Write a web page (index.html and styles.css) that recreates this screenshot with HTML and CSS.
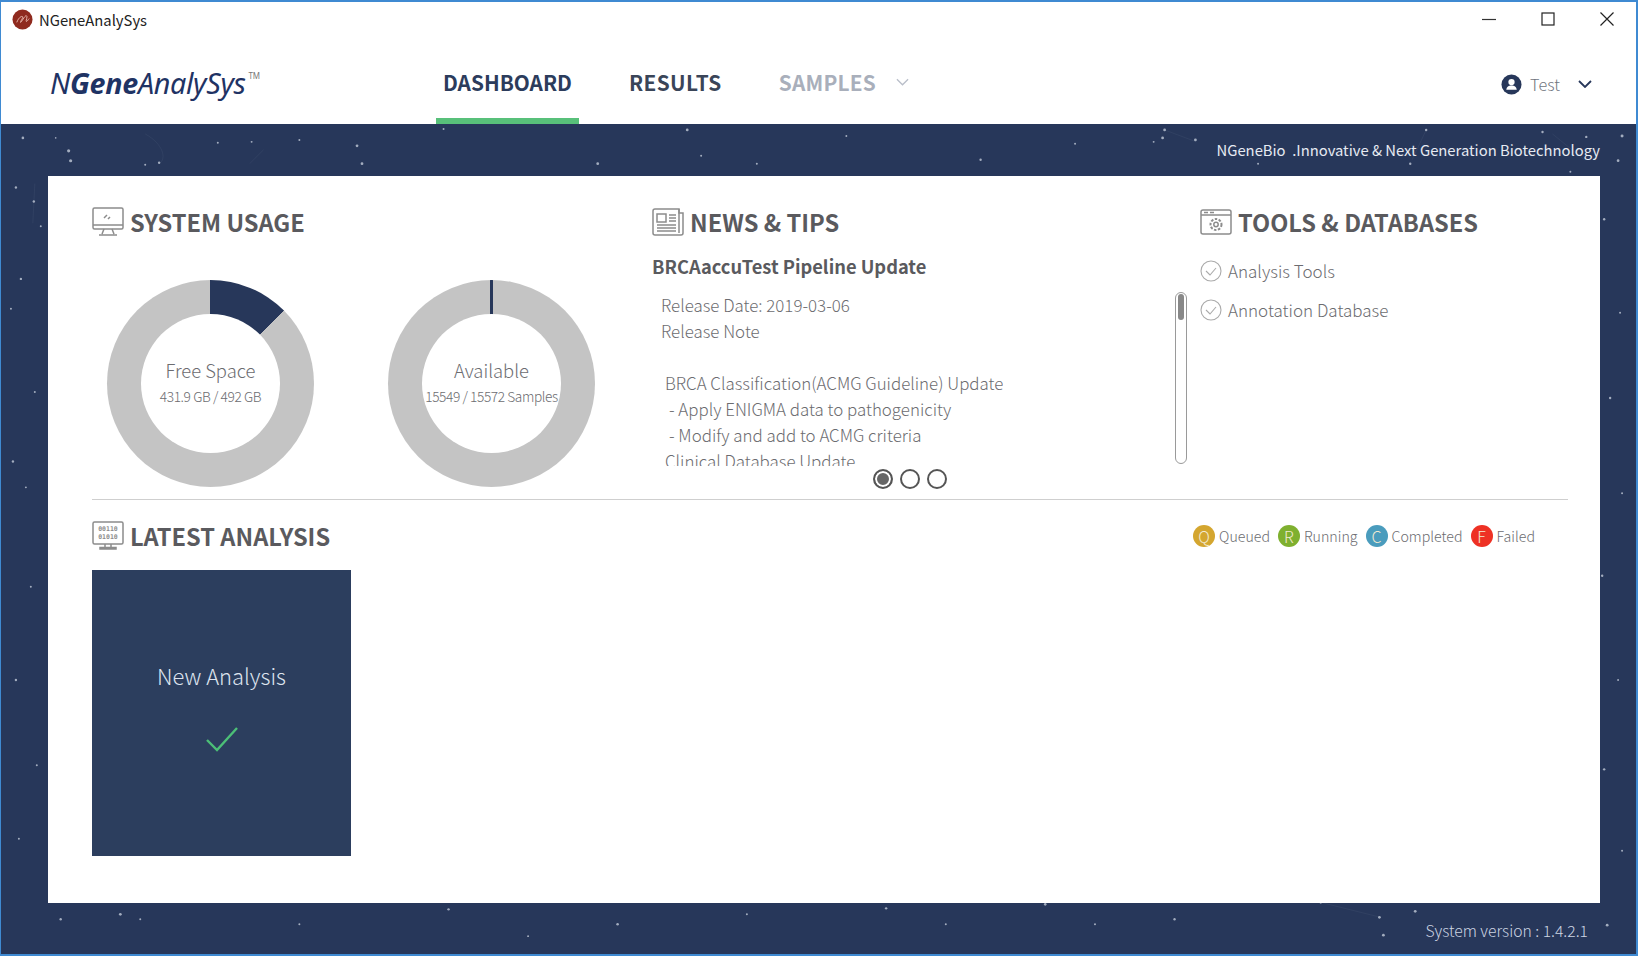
FILE: index.html
```html
<!DOCTYPE html>
<html lang="en">
<head>
<meta charset="utf-8">
<title>NGeneAnalySys</title>
<link rel="stylesheet" href="styles.css">
</head>
<body>
<div class="window">
  <div class="titlebar">
    <svg class="app-icon" viewBox="0 0 22 22"><circle cx="11" cy="11" r="10.5" fill="#8f2a1e"/><path d="M5 14c2-5 5-7 6-6s-3 6-2 6 4-7 6-7-1 6 0 6 2-2 3-3" fill="none" stroke="#e8b9ae" stroke-width="1"/></svg>
    <span class="app-title">NGeneAnalySys</span>
    <div class="win-controls">
      <svg viewBox="0 0 14 14"><path d="M0 7.5h14" stroke="#333" stroke-width="1.2"/></svg>
      <svg viewBox="0 0 14 14"><rect x="1" y="1" width="12" height="12" fill="none" stroke="#222" stroke-width="1.2"/></svg>
      <svg viewBox="0 0 14 14"><path d="M.5.5l13 13M13.500.5l-13 13" stroke="#222" stroke-width="1.2"/></svg>
    </div>
  </div>
  <header class="appbar">
    <div class="logo"><span class="logo-n">N</span><b>Gene</b>AnalySys<sup>TM</sup></div>
    <nav class="nav">
      <a class="tab tab-active">DASHBOARD</a>
      <a class="tab">RESULTS</a>
      <a class="tab tab-muted">SAMPLES
        <svg class="tab-chev" viewBox="0 0 14 8"><path d="M1 1l6 6 6-6" fill="none" stroke="#b9bec9" stroke-width="1.4"/></svg>
      </a>
    </nav>
    <div class="user">
      <svg class="user-icon" viewBox="0 0 22 22"><circle cx="11" cy="11" r="10.500" fill="#27375a"/><circle cx="11" cy="8.500" r="3.300" fill="#fff"/><path d="M5.500 16.500c.5-3.500 2.500-4.500 5.500-4.500s5 1 5.500 4.500z" fill="#fff"/></svg>
      <span class="user-name">Test</span>
      <svg class="user-chev" viewBox="0 0 14 8"><path d="M1 1l6 6 6-6" fill="none" stroke="#27375a" stroke-width="1.800"/></svg>
    </div>
  </header>
  <main class="stage">
    <svg class="stars" viewBox="0 0 1644 836" preserveAspectRatio="none" aria-hidden="true">
      <g fill="#c3cbd9" opacity=".8">
        <circle cx="22" cy="14" r="1.300"/><circle cx="55" cy="14" r=".8"/><circle cx="68" cy="27" r="1.600"/><circle cx="70" cy="37" r="1.600"/><circle cx="145" cy="41" r="1"/><circle cx="159" cy="39" r="1.200"/><circle cx="218" cy="19" r="1"/><circle cx="252" cy="18" r="1"/><circle cx="300" cy="16" r="1"/><circle cx="358" cy="22" r="1.400"/><circle cx="363" cy="40" r="1.400"/><circle cx="445" cy="5" r="1"/><circle cx="600" cy="40" r="1.400"/><circle cx="690" cy="6" r="1.400"/><circle cx="704" cy="32" r="1"/><circle cx="760" cy="40" r="1"/><circle cx="850" cy="12" r="1"/><circle cx="985" cy="36" r="1.200"/><circle cx="1080" cy="20" r="1"/><circle cx="1170" cy="6" r="1.400"/><circle cx="1168" cy="14" r="1.400"/><circle cx="1201" cy="16" r="1.400"/><circle cx="1159" cy="18" r="1"/><circle cx="1264" cy="40" r="1"/><circle cx="1417" cy="40" r="1.200"/><circle cx="1433" cy="6" r="1.200"/><circle cx="1550" cy="8" r="1.200"/><circle cx="1594" cy="13" r="1.200"/><circle cx="1630" cy="12" r="1.500"/><circle cx="1626" cy="37" r="1.400"/><circle cx="1578" cy="48" r="1"/>
        <circle cx="15" cy="64" r="1.200"/><circle cx="33" cy="78" r="1.200"/><circle cx="40" cy="103" r="1"/><circle cx="20" cy="156" r="1.200"/><circle cx="10" cy="186" r="1"/><circle cx="34" cy="270" r="1"/><circle cx="12" cy="340" r="1.200"/><circle cx="25" cy="366" r="1"/><circle cx="30" cy="466" r="1"/><circle cx="15" cy="560" r="1.200"/><circle cx="36" cy="646" r="1"/><circle cx="18" cy="720" r="1"/>
        <circle cx="1612" cy="96" r="1.200"/><circle cx="1628" cy="190" r="1"/><circle cx="1618" cy="276" r="1.200"/><circle cx="1630" cy="372" r="1"/><circle cx="1610" cy="455" r="1.200"/><circle cx="1626" cy="560" r="1"/><circle cx="1612" cy="650" r="1.200"/><circle cx="1630" cy="732" r="1"/>
        <circle cx="60" cy="801" r="1.200"/><circle cx="120" cy="796" r="1.400"/><circle cx="140" cy="801" r="1"/><circle cx="250" cy="781" r="1.200"/><circle cx="300" cy="806" r="1"/><circle cx="450" cy="791" r="1.200"/><circle cx="530" cy="818" r="1"/><circle cx="620" cy="806" r="1.300"/><circle cx="750" cy="796" r="1"/><circle cx="890" cy="790" r="1.200"/><circle cx="950" cy="806" r="1"/><circle cx="1050" cy="786" r="1.300"/><circle cx="1100" cy="806" r="1"/><circle cx="1180" cy="801" r="1.200"/><circle cx="1327" cy="784" r="1.300"/><circle cx="1386" cy="799" r="1.400"/><circle cx="1422" cy="793" r="1.400"/><circle cx="1390" cy="817" r="1.400"/><circle cx="1615" cy="807" r="1.400"/>
      </g>
      <g fill="none" stroke="#b9c2d2" stroke-width=".5" opacity=".14">
        <path d="M145 10c18 10 22 25 14 30M250 40l14-14M1170 6l32 12M1433 6l-14 30M1560 10l32 26M34 60l-2 40M1327 784l60 15"/>
      </g>
    </svg>
    <div class="tagline">NGeneBio &nbsp;.Innovative &amp; Next Generation Biotechnology</div>
    <section class="panel">
      <div class="top-grid">
        <div class="col">
          <h2 class="section-title">
            <svg class="section-icon" viewBox="0 0 32 30"><g fill="none" stroke="#8c8c8c" stroke-width="1.500"><rect x="1" y="1" width="30" height="21" rx="1.500"/><path d="M1 18h30M12 22l-2 5M20 22l2 5M7 28h18"/><path d="M12 11l3-3M16 12l2-2"/></g></svg>
            SYSTEM USAGE
          </h2>
          <div class="donuts">
            <div class="donut donut-disk">
              <div class="donut-hole"><span class="donut-label">Free Space</span><span class="donut-value">431.9 GB / 492 GB</span></div>
            </div>
            <div class="donut donut-samples">
              <div class="donut-hole"><span class="donut-label">Available</span><span class="donut-value">15549 / 15572 Samples</span></div>
            </div>
          </div>
        </div>
        <div class="col">
          <h2 class="section-title">
            <svg class="section-icon" viewBox="0 0 32 30"><g fill="none" stroke="#8c8c8c" stroke-width="1.500"><path d="M27 2H3a2 2 0 0 0-2 2v22a2 2 0 0 0 2 2h26a2 2 0 0 0 2-2V6h-4z"/><path d="M27 2v24"/><rect x="5" y="7" width="9" height="8"/><path d="M17 8h7M17 11h7M17 14h7M5 18h19M5 21h19M5 24h19"/></g></svg>
            NEWS &amp; TIPS
          </h2>
          <h3 class="news-title">BRCAaccuTest Pipeline Update</h3>
          <div class="news-body">
            <div class="news-text">
              <p class="ind-1">Release Date: 2019-03-06</p>
              <p class="ind-1">Release Note</p>
              <p class="blank">&nbsp;</p>
              <p class="ind-2">BRCA Classification(ACMG Guideline) Update</p>
              <p class="ind-3">- Apply ENIGMA data to pathogenicity</p>
              <p class="ind-3">- Modify and add to ACMG criteria</p>
              <p class="ind-2">Clinical Database Update</p>
            </div>
            <div class="scrollbar"><div class="scroll-thumb"></div></div>
          </div>
          <div class="pager">
            <span class="pager-dot pager-on"></span><span class="pager-dot"></span><span class="pager-dot"></span>
          </div>
        </div>
        <div class="col">
          <h2 class="section-title">
            <svg class="section-icon" viewBox="0 0 32 30"><g fill="none" stroke="#8c8c8c" stroke-width="1.500"><rect x="1" y="3" width="30" height="24" rx="2"/><path d="M1 8h30M4 5.500h4M10 5.500h4"/><circle cx="16" cy="17.500" r="2.200"/><circle cx="16" cy="17.500" r="5.500" stroke-width="2" stroke-dasharray="2.500 1.500"/></g></svg>
            TOOLS &amp; DATABASES
          </h2>
          <ul class="tools">
            <li class="tool"><svg class="tool-check" viewBox="0 0 22 22"><circle cx="11" cy="11" r="10" fill="none" stroke="#aaa" stroke-width="1.100"/><path d="M6 11l4 4 6-7" fill="none" stroke="#aaa" stroke-width="1.100"/></svg>Analysis Tools</li>
            <li class="tool"><svg class="tool-check" viewBox="0 0 22 22"><circle cx="11" cy="11" r="10" fill="none" stroke="#aaa" stroke-width="1.100"/><path d="M6 11l4 4 6-7" fill="none" stroke="#aaa" stroke-width="1.100"/></svg>Annotation Database</li>
          </ul>
        </div>
      </div>
      <hr class="divider">
      <div class="latest-head">
        <h2 class="section-title">
          <svg class="section-icon" viewBox="0 0 32 30"><g fill="none" stroke="#8c8c8c" stroke-width="1.500"><rect x="1" y="1" width="30" height="22" rx="1.500"/><path d="M13 23v3M19 23v3M8 28h16v-1.500H8z"/></g><text x="16" y="10" class="bits">00110</text><text x="16" y="18" class="bits">01010</text></svg>
          LATEST ANALYSIS
        </h2>
        <div class="legend">
          <span class="legend-item"><i class="badge badge-q">Q</i>Queued</span>
          <span class="legend-item"><i class="badge badge-r">R</i>Running</span>
          <span class="legend-item"><i class="badge badge-c">C</i>Completed</span>
          <span class="legend-item"><i class="badge badge-f">F</i>Failed</span>
        </div>
      </div>
      <div class="new-card">
        <span class="new-label">New Analysis</span>
        <svg class="new-check" viewBox="0 0 34 28"><path d="M2 15l10 10L32 3" fill="none" stroke="#4cbf77" stroke-width="2.400"/></svg>
      </div>
    </section>
    <div class="version">System version : 1.4.2.1</div>
  </main>
</div>
</body>
</html>
```

FILE: styles.css
```css
* { box-sizing: border-box; }
html, body { margin: 0; padding: 0; }
body {
  width: 1644px;
  height: 960px;
  overflow: hidden;
  background: #fff;
  font-family: "Noto Sans CJK KR", "Noto Sans", sans-serif;
  color: #6b6b6b;
}
.window {
  width: 1638px;
  height: 956px;
  display: flex;
  flex-direction: column;
  border: 1px solid #3f8ad2;
  border-width: 2px 2px 2px 1px;
}
.titlebar {
  height: 38px;
  display: flex;
  align-items: center;
  padding: 0 0 4px 11px;
  background: #fff;
}
.app-icon { width: 21px; height: 21px; margin-right: 6px; }
.app-title { font-size: 14.8px; color: #222; }
.win-controls {
  margin-left: auto;
  display: flex;
  gap: 45px;
  padding-right: 22px;
}
.win-controls svg { width: 14px; height: 14px; }

.appbar {
  height: 84px;
  display: flex;
  align-items: stretch;
  background: #fff;
  padding-left: 49px;
  padding-right: 44px;
}
.logo {
  width: 386px;
  padding-top: 23px;
  font-family: "Noto Sans", sans-serif;
  font-style: italic;
  font-size: 28.7px;
  letter-spacing: -.3px;
  color: #1f3364;
}
.logo b { font-weight: 700; }
.logo sup { font-size: 8px; font-style: normal; color: #777; vertical-align: 15px; margin-left: 3px; }
.nav { display: flex; align-items: stretch; }
.tab {
  display: flex;
  align-items: center;
  gap: 20px;
  height: 84px;
  padding: 5px 7px 0;
  margin-right: 43px;
  font-size: 20.8px;
  font-weight: 700;
  letter-spacing: .4px;
  color: #3a4558;
  border-bottom: 6px solid transparent;
}
.tab-active { color: #2c3c5c; letter-spacing: 0; border-bottom-color: #58c07a; }
.tab-muted { color: #a9afbb; letter-spacing: .2px; }
.tab-chev { width: 13px; height: 8px; }
.user { margin-left: auto; display: flex; align-items: center; padding-top: 4px; }
.user-icon { width: 21px; height: 21px; margin-right: 8px; }
.user-name { font-size: 16.3px; font-weight: 300; color: #70757e; margin-right: 18px; }
.user-chev { width: 14px; height: 8px; }

.stage {
  position: relative;
  flex: 1;
  display: flex;
  flex-direction: column;
  background: #27375a;
  padding: 0 36px 0 47px;
}
.stars { position: absolute; left: 0; top: 0; width: 100%; height: 100%; }
.tagline {
  position: relative;
  height: 52px;
  line-height: 52px;
  text-align: right;
  font-size: 14.8px;
  color: #e6eaf2;
}
.panel {
  position: relative;
  height: 727px;
  background: #fff;
  padding: 0 32px 0 44px;
}
.top-grid {
  display: grid;
  grid-template-columns: 560px 548px 1fr;
  height: 323px;
  padding-top: 27px;
}
.col { min-width: 0; }
.section-title {
  display: flex;
  align-items: center;
  gap: 6px;
  margin: 0;
  height: 38px;
  font-size: 23.6px;
  font-weight: 700;
  color: #5a5a5e;
  white-space: nowrap;
}
.section-icon { width: 32px; height: 30px; flex: none; }
.bits { font-size: 6.500px; font-family: "DejaVu Sans Mono", monospace; fill: #8c8c8c; text-anchor: middle; }

.donuts { display: flex; gap: 74px; margin: 39px 0 0 15px; }
.donut {
  width: 207px;
  height: 207px;
  border-radius: 50%;
  display: flex;
  align-items: center;
  justify-content: center;
}
.donut-disk { background: conic-gradient(#27375a 0 45deg, #c4c4c4 0); }
.donut-samples { background: conic-gradient(from -1deg, #27375a 0 2deg, #c4c4c4 0); }
.donut-hole {
  width: 139px;
  height: 139px;
  border-radius: 50%;
  background: #fff;
  display: flex;
  flex-direction: column;
  align-items: center;
  justify-content: center;
  padding-bottom: 5px;
  white-space: nowrap;
}
.donut-label { font-size: 18.4px; font-weight: 300; line-height: 28px; color: #6c6c70; }
.donut-value { font-size: 13.7px; font-weight: 300; line-height: 22px; margin-top: 1px; color: #6c6c70; letter-spacing: -.4px; }

.news-title { margin: 10px 0 0; font-size: 18.3px; line-height: 30px; font-weight: 700; color: #5a5a5e; }
.news-body { display: flex; height: 174px; margin-top: 11px; width: 528px; justify-content: space-between; }
.news-text { height: 174px; overflow: hidden; font-size: 16.9px; font-weight: 300; line-height: 26px; color: #6c6c70; white-space: nowrap; }
.news-text p { margin: 0; }
.ind-1 { padding-left: 9px; }
.ind-2 { padding-left: 13px; }
.ind-3 { padding-left: 17px; }
.scrollbar {
  width: 12px;
  height: 172px;
  border: 1px solid #9a9a9a;
  border-radius: 6px;
  padding: 1px 2px;
  margin-right: -7px;
}
.scroll-thumb { height: 26px; background: #888; border-radius: 3px; }
.pager { display: flex; justify-content: center; gap: 7px; margin: 3px 0 0 -32px; }
.pager-dot { width: 20px; height: 20px; border-radius: 50%; border: 2px solid #555; background: #fff; }
.pager-on { background: #666; box-shadow: inset 0 0 0 2px #fff; }

.tools { list-style: none; margin: 10px 0 0; padding: 0; }
.tool { display: flex; align-items: center; gap: 6px; height: 39px; font-size: 17px; font-weight: 300; color: #6c6c70; }
.tool-check { width: 22px; height: 22px; }

.divider { margin: 0; border: 0; border-top: 1px solid #cfcfcf; width: 1476px; }
.latest-head { display: flex; align-items: center; justify-content: space-between; padding: 17px 33px 0 0; }
.legend { display: flex; gap: 8px; font-size: 14.200px; font-weight: 300; color: #6c6c70; }
.legend-item { display: flex; align-items: center; gap: 4px; }
.badge {
  width: 22px;
  height: 22px;
  border-radius: 50%;
  display: flex;
  align-items: center;
  justify-content: center;
  font-style: normal;
  font-size: 16px;
  color: #f2ead2;
}
.badge-q { background: #d4a62f; }
.badge-r { background: #7fb02f; }
.badge-c { background: #4a9cbd; }
.badge-f { background: #ee3124; }
.new-card {
  width: 259px;
  height: 286px;
  margin-top: 15px;
  background: #2c3e5e;
  display: flex;
  flex-direction: column;
  align-items: center;
  padding-top: 86px;
}
.new-label { font-size: 21.9px; font-weight: 300; line-height: 40px; color: #dde3ee; }
.new-check { width: 34px; height: 28px; margin-top: 29px; }
.version {
  position: relative;
  margin-top: 16px;
  padding-right: 12px;
  text-align: right;
  font-size: 15.7px;
  font-weight: 300;
  color: #cdd5e3;
}
```
